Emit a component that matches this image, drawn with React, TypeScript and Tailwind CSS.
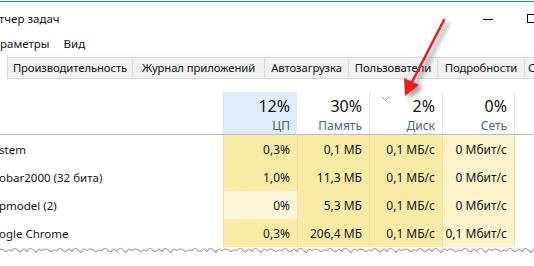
import React from "react";

const cols = ["w-[74px]", "w-[72px]", "w-[73px]", "w-[73px]"];

type Row = { name: string; cells: { v: string; bg: string }[] };

const A = "bg-[#f9eba6]";
const B = "bg-[#fcf3cb]";
const C = "bg-[#fdf6d9]";

const rows: Row[] = [
  { name: "stem", cells: [{ v: "0,3%", bg: A }, { v: "0,1 МБ", bg: A }, { v: "0,1 МБ/с", bg: A }, { v: "0 Мбит/с", bg: B }] },
  { name: "obar2000 (32 бита)", cells: [{ v: "1,0%", bg: A }, { v: "11,3 МБ", bg: A }, { v: "0,1 МБ/с", bg: A }, { v: "0 Мбит/с", bg: B }] },
  { name: "pmodel (2)", cells: [{ v: "0%", bg: C }, { v: "5,3 МБ", bg: A }, { v: "0,1 МБ/с", bg: A }, { v: "0 Мбит/с", bg: B }] },
  { name: "ogle Chrome", cells: [{ v: "0,3%", bg: A }, { v: "206,4 МБ", bg: A }, { v: "0,1 МБ/с", bg: A }, { v: "0,1 Мбит/с", bg: B }] },
];

const tabs = [
  { t: "Производительность", w: "w-[125px]" },
  { t: "Журнал приложений", w: "w-[132px]" },
  { t: "Автозагрузка", w: "w-[84px]" },
  { t: "Пользователи", w: "w-[89px]" },
  { t: "Подробности", w: "w-[87px]" },
];

export default function App() {
  const jag: string[] = [];
  for (let x = 0, i = 0; x <= 540; x += 3, i++) {
    const y = 250 + ((i * 7) % 5) - 2 + (i % 3 === 0 ? 1 : 0);
    jag.push(`${x},${y}`);
  }
  const jagLine = jag.join(" ");
  const jagPoly = `0,266 ${jagLine} 540,266`;
  return (
    <div
      className="relative w-[534px] h-[266px] overflow-hidden bg-white text-[#141414]"
      style={{ fontFamily: '"Noto Sans", "Open Sans", sans-serif' }}
    >
      <div className="h-px bg-white" />
      <div className="h-px bg-[#2b7bd2]" />
      {/* title bar */}
      <div className="h-[34px] flex items-center justify-between text-[11.5px]">
        <span className="-ml-px">тчер задач</span>
        <div className="flex items-center h-full -mr-[3px]">
          <div className="w-[10px] h-px bg-black mr-[34px]" />
          <div className="w-[10px] h-[9px] border border-black -mt-[2px]" />
        </div>
      </div>
      {/* menu */}
      <div className="h-[16px] flex items-center text-[11.5px]">
        <span>раметры</span>
        <span className="ml-[14px]">Вид</span>
      </div>
      {/* tabs */}
      <div className="h-[27px] flex items-end bg-gradient-to-b from-[#ffffff] to-[#f2f2f2] pt-[5px]">
        <div className="flex h-[22px] w-full border-b border-[#d9d9d9]">
          <div className="w-[8px] h-[24px] -mt-[2px] bg-white border-r border-[#d9d9d9] shrink-0" />
          {tabs.map((t) => (
            <div
              key={t.t}
              className={`${t.w} shrink-0 h-full bg-[#f0f0f0] border-r border-t border-[#d9d9d9] flex items-center justify-center text-[11.3px] tracking-[-0.1px] whitespace-nowrap overflow-hidden`}
            >
              {t.t}
            </div>
          ))}
          <div className="flex-1 h-full bg-[#f0f0f0] border-t border-[#d9d9d9] flex items-center pl-[3px] text-[11.3px] overflow-hidden whitespace-nowrap">
            С
          </div>
        </div>
      </div>
      <div className="h-[13px]" />
      {/* header */}
      <div className="flex h-[43px] border-b border-[#bcbcbc]">
        <div className="w-[223px] shrink-0" />
        <div className={`${cols[0]} shrink-0 bg-[#dfedfa] border-l border-[#d6e5f2] flex flex-col items-end pr-[7px] pt-[3px]`}>
          <span className="text-[16px] leading-[22px] text-[#111]">12%</span>
          <span className="text-[12px] leading-[17px] text-[#4a6384]">ЦП</span>
        </div>
        <div className={`${cols[1]} shrink-0 flex flex-col items-end pr-[7px] pt-[3px]`}>
          <span className="text-[16px] leading-[22px] text-[#111]">30%</span>
          <span className="text-[12px] leading-[17px] text-[#4a6384]">Память</span>
        </div>
        <div className={`${cols[2]} shrink-0 relative border-l border-[#e3e3e3] flex flex-col items-end pr-[7px] pt-[3px]`}>
          <svg className="absolute left-[11px] top-[4px]" width="9" height="6" viewBox="0 0 9 6">
            <path d="M1 1 L4.5 4.5 L8 1" fill="none" stroke="#9a9a9a" strokeWidth="1" />
          </svg>
          <span className="text-[16px] leading-[22px] text-[#111]">2%</span>
          <span className="text-[12px] leading-[17px] text-[#4a6384]">Диск</span>
        </div>
        <div className={`${cols[3]} shrink-0 border-l border-[#e3e3e3] border-r flex flex-col items-end pr-[7px] pt-[3px]`}>
          <span className="text-[16px] leading-[22px] text-[#111]">0%</span>
          <span className="text-[12px] leading-[17px] text-[#4a6384]">Сеть</span>
        </div>
        <div className="flex-1" />
      </div>
      {/* rows */}
      {rows.map((r) => (
        <div key={r.name} className="flex h-[28px] text-[12px]">
          <div className="w-[223px] shrink-0 flex items-center whitespace-nowrap overflow-hidden text-[11.5px] pt-px">
            <span className="-ml-[1px]">{r.name}</span>
          </div>
          {r.cells.map((c, i) => (
            <div
              key={i}
              className={`${cols[i]} shrink-0 ${c.bg} border-l border-[#f0df98] ${i === 3 ? "border-r border-r-[#e8dca8]" : ""} flex items-center justify-end pr-[7px] pt-px whitespace-nowrap`}
            >
              {c.v}
            </div>
          ))}
          <div className="flex-1" />
        </div>
      ))}
      {/* torn edge */}
      <svg className="absolute left-0 top-0" width="534" height="266" viewBox="0 0 534 266">
        <defs>
          <filter id="sh" x="-10%" y="-10%" width="120%" height="130%">
            <feGaussianBlur stdDeviation="1.2" />
          </filter>
          <filter id="ash" x="-50%" y="-50%" width="200%" height="200%">
            <feGaussianBlur stdDeviation="2" />
          </filter>
        </defs>
        <polyline points={jagLine} fill="none" stroke="#8a8a8a" strokeWidth="2" filter="url(#sh)" transform="translate(0,1)" />
        <polygon points={jagPoly} fill="#ffffff" />
        <polyline points={jagLine} fill="none" stroke="#9a9a9a" strokeWidth="0.8" />
        {/* arrow shadow */}
        <g filter="url(#ash)" opacity="0.55" transform="translate(4,3)">
          <line x1="444" y1="20" x2="412" y2="82" stroke="#555" strokeWidth="3" />
          <polygon points="405,96 404,78 419,85" fill="#555" />
        </g>
        <line x1="444" y1="20" x2="412" y2="82" stroke="#ee1c1c" strokeWidth="2.5" strokeLinecap="round" />
        <polygon points="405,96 404,78 419,85" fill="#ee1c1c" />
      </svg>
    </div>
  );
}
